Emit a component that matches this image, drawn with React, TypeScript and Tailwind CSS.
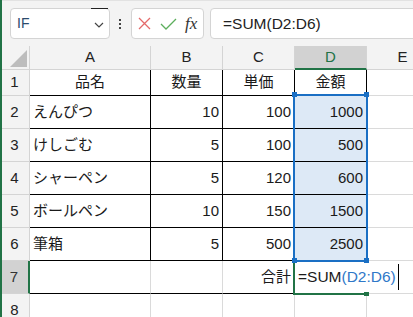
import React from 'react';

const GRID = 'border-r-[#dadada]';
const GRIDB = 'border-b-[#dadada]';

type CellProps = {
  w: string;
  r?: string;
  b?: string;
  bg?: string;
  align?: string;
  children?: React.ReactNode;
  extra?: string;
};

function Cell({ w, r = GRID, b = GRIDB, bg = 'bg-white', align = 'justify-start', children, extra = '' }: CellProps) {
  return (
    <div className={`${w} h-full shrink-0 border-r border-b ${r} ${b} ${bg} flex items-center ${align} px-[3px] whitespace-nowrap ${extra}`}>
      {children}
    </div>
  );
}

function RowHead({ n, active = false }: { n: string; active?: boolean }) {
  return (
    <div
      className={`w-[30px] h-full shrink-0 border-b border-b-[#d4d4d4] flex items-center justify-center text-[15px] ${
        active ? 'bg-[#d2d2d2] border-r-2 border-r-[#217346] text-[#333]' : 'bg-[#f3f3f3] border-r border-r-[#d4d4d4] text-[#222]'
      }`}
    >
      {n}
    </div>
  );
}

const COLW = ['w-[121px]', 'w-[72px]', 'w-[72px]', 'w-[72px]', 'w-[72px]'];

const data: [string, string, string, string][] = [
  ['えんぴつ', '10', '100', '1000'],
  ['けしごむ', '5', '100', '500'],
  ['シャーペン', '5', '120', '600'],
  ['ボールペン', '10', '150', '1500'],
  ['筆箱', '5', '500', '2500'],
];

export default function App() {
  return (
    <div className="relative w-[413px] h-[317px] overflow-hidden bg-white font-['Liberation_Sans','Noto_Sans_CJK_JP',sans-serif] text-[#1a1a1a]">
      {/* toolbar */}
      <div className="h-[46px] bg-[#f3f3f3] border-t border-t-[#e2e2e2] flex items-start pt-[7px]">
        {/* name box */}
        <div className="relative ml-[10px] w-[100px] h-[31px] shrink-0 bg-white border border-[#d4d4d4] rounded-[4px] flex items-center justify-between pl-[6px] pr-[5px]">
          <span className="text-[14px] text-[#2b4a6c]">IF</span>
          <svg width="10" height="6" viewBox="0 0 10 6" className="mt-[2px]">
            <polyline points="1,1 5,5 9,1" fill="none" stroke="#444" strokeWidth="1.2" />
          </svg>
          <span className="absolute right-[1px] top-[-1px] w-[17px] h-[1px] bg-[#222]" />
        </div>
        {/* dots */}
        <div className="ml-[9px] mt-[11px] flex flex-col gap-[2px] shrink-0">
          <span className="w-[2px] h-[2px] bg-[#444]" />
          <span className="w-[2px] h-[2px] bg-[#444]" />
          <span className="w-[2px] h-[2px] bg-[#444]" />
        </div>
        {/* formula buttons */}
        <div className="ml-[10px] w-[73px] h-[31px] shrink-0 bg-white border border-[#d4d4d4] rounded-[4px] flex items-center pl-[6px]">
          <svg width="13" height="13" viewBox="0 0 13 13">
            <path d="M1 1 L12 12 M12 1 L1 12" stroke="#e46a6a" strokeWidth="1.3" fill="none" />
          </svg>
          <svg width="17" height="12" viewBox="0 0 17 12" className="ml-[9px]">
            <polyline points="1,6 6,11 16,1" stroke="#5cae5c" strokeWidth="1.3" fill="none" />
          </svg>
          <span className="ml-[8px] text-[17px] italic text-[#333] font-['Liberation_Serif',serif] leading-none">fx</span>
        </div>
        {/* formula bar */}
        <div className="ml-[6px] w-[230px] h-[31px] shrink-0 bg-white border border-[#d4d4d4] rounded-[4px] flex items-center pl-[12px]">
          <span className="text-[15.5px] text-[#222]">=SUM(D2:D6)</span>
        </div>
      </div>

      {/* column header */}
      <div className="flex h-[24px]">
        <div className="w-[30px] h-full shrink-0 bg-[#f3f3f3] border-r border-b border-[#d4d4d4] flex items-end justify-end pr-[2px] pb-[2px]">
          <svg width="17" height="17" viewBox="0 0 17 17">
            <polygon points="17,0 17,17 0,17" fill="#bdbdbd" />
          </svg>
        </div>
        {['A', 'B', 'C', 'D', 'E'].map((l, i) => (
          <div
            key={l}
            className={`${COLW[i]} h-full shrink-0 border-r border-r-[#d4d4d4] flex items-center justify-center text-[15px] ${
              l === 'D' ? 'bg-[#d2d2d2] border-b-2 border-b-[#217346] text-[#217346]' : 'bg-[#f3f3f3] border-b border-b-[#d4d4d4] text-[#222]'
            }`}
          >
            {l}
          </div>
        ))}
      </div>

      {/* row 1 */}
      <div className="flex h-[26px] text-[15px]">
        <RowHead n="1" />
        <Cell w={COLW[0]} r="border-r-black" b="border-b-black" align="justify-center">品名</Cell>
        <Cell w={COLW[1]} r="border-r-black" b="border-b-black" align="justify-center">数量</Cell>
        <Cell w={COLW[2]} r="border-r-black" b="border-b-black" align="justify-center">単価</Cell>
        <Cell w={COLW[3]} r="border-r-black" b="border-b-black" align="justify-center">金額</Cell>
        <Cell w={COLW[4]} />
      </div>

      {data.map((row, i) => (
        <div key={i} className="flex h-[33px] text-[15px]">
          <RowHead n={String(i + 2)} />
          <Cell w={COLW[0]} r="border-r-black" b="border-b-black">{row[0]}</Cell>
          <Cell w={COLW[1]} r="border-r-black" b="border-b-black" align="justify-end">{row[1]}</Cell>
          <Cell w={COLW[2]} r="border-r-black" b="border-b-black" align="justify-end">{row[2]}</Cell>
          <Cell w={COLW[3]} r="border-r-black" b="border-b-black" bg="bg-[#dde9f6]" align="justify-end">{row[3]}</Cell>
          <Cell w={COLW[4]} />
        </div>
      ))}

      {/* row 7 */}
      <div className="flex h-[33px] text-[15px]">
        <RowHead n="7" active />
        <Cell w={COLW[0]} b="border-b-black" />
        <Cell w={COLW[1]} b="border-b-black" />
        <Cell w={COLW[2]} r="border-r-[#217346]" b="border-b-black" align="justify-end">合計</Cell>
        <Cell w={COLW[3]} r="border-r-white" b="border-b-[#217346]" extra="relative z-10 overflow-visible">
          <span className="text-[15.5px] text-[#1a1a1a]">
            =SUM<span className="text-[#2f78c8]">(D2:D6)</span>
          </span>
          <span className="inline-block ml-[2px] w-[1.5px] h-[26px] bg-black shrink-0" />
        </Cell>
        <Cell w={COLW[4]} bg="bg-transparent" />
      </div>

      {/* row 8 */}
      <div className="flex h-[33px] text-[15px]">
        <RowHead n="8" />
        <Cell w={COLW[0]} />
        <Cell w={COLW[1]} />
        <Cell w={COLW[2]} />
        <Cell w={COLW[3]} />
        <Cell w={COLW[4]} />
      </div>

      {/* left window stripe */}
      <div className="absolute left-0 top-0 bottom-0 w-[2px] bg-[#217346]" />

      {/* selection D2:D6 */}
      <div className="absolute left-[293px] top-[94px] w-[75px] h-[168px] border-2 border-[#1a6fc4] z-20 pointer-events-none" />
      <div className="absolute left-[292px] top-[92px] w-[5px] h-[5px] bg-[#1a6fc4] z-30" />
      <div className="absolute left-[364px] top-[92px] w-[5px] h-[5px] bg-[#1a6fc4] z-30" />
      <div className="absolute left-[292px] top-[258px] w-[5px] h-[5px] bg-[#1a6fc4] z-30" />
      <div className="absolute left-[364px] top-[258px] w-[5px] h-[5px] bg-[#1a6fc4] z-30" />

      {/* active cell D7 */}
      <div className="absolute left-[293px] top-[261px] w-[74px] h-[34px] border-l-2 border-b-2 border-[#217346] z-20 pointer-events-none" />
      <div className="absolute left-[364px] top-[292px] w-[5px] h-[4px] bg-[#217346] z-30" />
    </div>
  );
}
